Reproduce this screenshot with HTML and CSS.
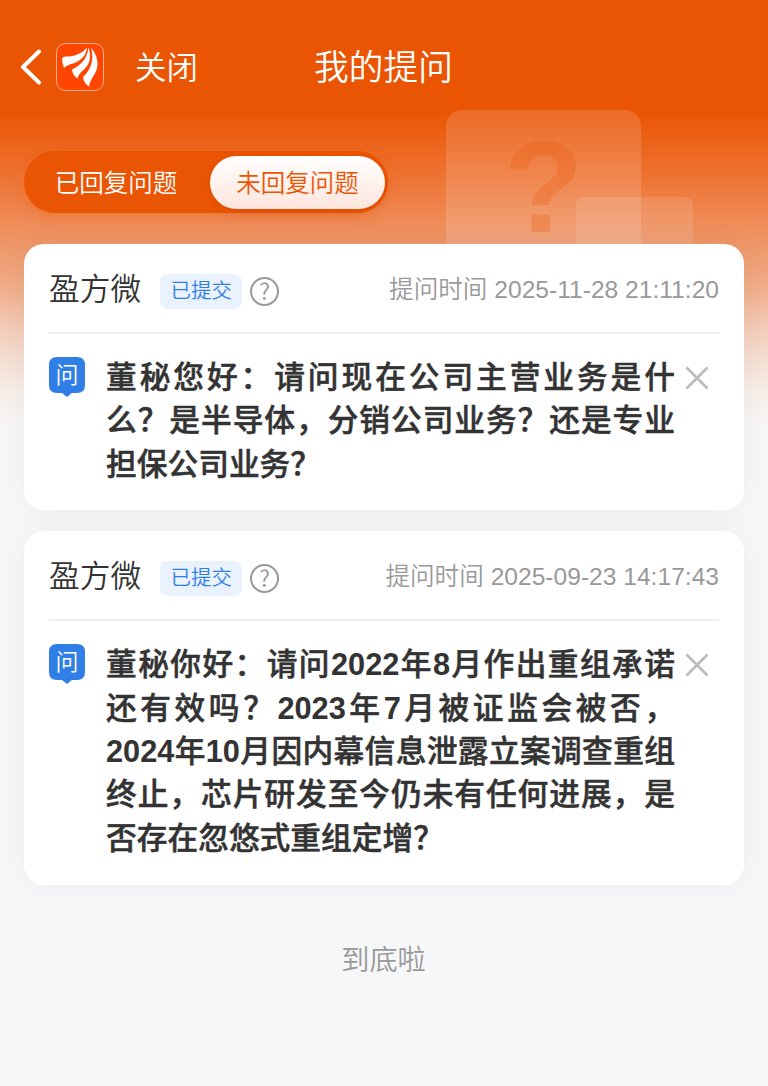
FILE: index.html
```html
<!DOCTYPE html>
<html lang="zh-CN">
<head>
    <meta charset="UTF-8">
    <meta name="viewport" content="width=device-width, initial-scale=1.0">
    <title>我的提问</title>
    <link rel="stylesheet" href="styles.css">
</head>
<body>

    <div class="banner-art">
        <div class="square-big"><span>?</span></div>
        <div class="square-small"></div>
    </div>

    <header class="nav">
        <svg class="back" width="22" height="36" viewBox="0 0 22 36"><path d="M19 2.500L3 18L19 33.500" fill="none" stroke="#fff" stroke-width="4" stroke-linecap="round" stroke-linejoin="round"/></svg>
        <svg class="logo" width="48" height="48" viewBox="0 0 48 48">
            <rect x="0.500" y="0.500" width="47" height="47" rx="9" fill="#ff4500" stroke="#ffb08c"/>
            <path d="M6 15.500Q7 13.800 10 13.600C19 13.500 27 10 31 4.200C30.500 12 25 18 17 20.500Q11 22 8 25Q6 20 6 15.500Z" fill="#fff"/>
            <path d="M32.300 4.200C35 12 34.500 18 31 23C28 27.500 23 29.500 21.500 35.500Q16.500 32 16 26.500C24 23 32 15 32.300 4.200Z" fill="#fff"/>
            <path d="M35 5C39 9 41.500 15 41.500 21C41.500 31 34.500 34 33 43.500Q27.500 40 27 34C35 27 38.500 16 35 5Z" fill="#fff"/>
        </svg>
        <span class="close">关闭</span>
        <h1 class="title">我的提问</h1>
    </header>

    <div class="tabs">
        <div class="tab">已回复问题</div>
        <div class="tab active">未回复问题</div>
    </div>

    <main class="list">
        <section class="card">
            <div class="card-head">
                <span class="stock">盈方微</span>
                <span class="tag">已提交</span>
                <span class="help">?</span>
                <span class="time">提问时间 2025-11-28 21:11:20</span>
            </div>
            <div class="card-body">
                <svg class="ask" width="36" height="40" viewBox="0 0 36 40">
                    <path d="M8 0H28Q36 0 36 8V28Q36 36 28 36H23L18 40L13 36H8Q0 36 0 28V8Q0 0 8 0Z" fill="#2f7fe6"/>
                    <text x="18" y="26" text-anchor="middle">问</text>
                </svg>
                <div class="question">
                    <p>董秘您好：请问现在公司主营业务是什</p>
                    <p>么？是半导体，分销公司业务？还是专业</p>
                    <p>担保公司业务？</p>
                </div>
                <svg class="remove" width="24" height="24" viewBox="0 0 24 24"><path d="M1.500 1.500L22.500 22.500M22.500 1.500L1.500 22.500" stroke="#bbb" stroke-width="2.600"/></svg>
            </div>
        </section>

        <section class="card">
            <div class="card-head">
                <span class="stock">盈方微</span>
                <span class="tag">已提交</span>
                <span class="help">?</span>
                <span class="time">提问时间 2025-09-23 14:17:43</span>
            </div>
            <div class="card-body">
                <svg class="ask" width="36" height="40" viewBox="0 0 36 40">
                    <path d="M8 0H28Q36 0 36 8V28Q36 36 28 36H23L18 40L13 36H8Q0 36 0 28V8Q0 0 8 0Z" fill="#2f7fe6"/>
                    <text x="18" y="26" text-anchor="middle">问</text>
                </svg>
                <div class="question">
                    <p>董秘你好：请问<b>2022</b>年<b>8</b>月作出重组承诺</p>
                    <p>还有效吗？<b>2023</b>年<b>7</b>月被证监会被否，</p>
                    <p><b>2024</b>年<b>10</b>月因内幕信息泄露立案调查重组</p>
                    <p>终止，芯片研发至今仍未有任何进展，是</p>
                    <p>否存在忽悠式重组定增？</p>
                </div>
                <svg class="remove" width="24" height="24" viewBox="0 0 24 24"><path d="M1.500 1.500L22.500 22.500M22.500 1.500L1.500 22.500" stroke="#bbb" stroke-width="2.600"/></svg>
            </div>
        </section>
    </main>

    <p class="end">到底啦</p>

</body>
</html>
```
FILE: styles.css
```css
* {
    box-sizing: border-box;
}

body {
    margin: 0;
    min-height: 1086px;
    position: relative;
    font-family: "Liberation Sans", "Noto Sans CJK SC", sans-serif;
    font-weight: 350;
    color: #333;
    background: #f6f7f9 linear-gradient(#ea5504 0, #ea5504 112px, #ee7535 180px, #ef9262 235px, #f1af8b 290px, #f4cab5 325px, #f5dfd3 360px, #f7eee9 392px, #f7f7f7 425px, #f7f7f8 600px, #f6f7f9 800px) no-repeat;
}

h1,
p {
    margin: 0;
    font-weight: inherit;
}

.banner-art {
    position: absolute;
    left: 446px;
    top: 110px;
    width: 248px;
    height: 150px;
    overflow: hidden;
}

.square-big {
    width: 195px;
    height: 195px;
    border-radius: 16px;
    background: rgba(255, 255, 255, 0.14);
    text-align: center;
}

.square-big span {
    font-size: 130px;
    line-height: 155px;
    font-weight: 700;
    color: rgba(234, 85, 4, 0.25);
}

.square-small {
    position: absolute;
    left: 130px;
    top: 87px;
    width: 117px;
    height: 117px;
    border-radius: 8px;
    background: rgba(255, 255, 255, 0.11);
}

.nav {
    position: relative;
    display: flex;
    align-items: center;
    height: 133px;
    padding-left: 20px;
    color: #fff;
}

.logo {
    margin-left: 14px;
}

.close {
    margin: 0 0 3px 31px;
    font-size: 31.500px;
}

.title {
    position: absolute;
    left: 0;
    right: 1px;
    padding-bottom: 3px;
    text-align: center;
    font-size: 34.700px;
}

.tabs {
    position: relative;
    display: flex;
    width: 364px;
    height: 62px;
    margin: 18px 0 0 24px;
    padding: 5px 3px 4px 0;
    border-radius: 31px;
    background: #ea5504;
    box-shadow: 0 4px 12px rgba(234, 85, 4, 0.3);
}

.tab {
    flex: 1;
    display: flex;
    align-items: center;
    justify-content: center;
    padding: 0 2px 2px 0;
    font-size: 24.500px;
    color: #fff;
}

.tab.active {
    flex: none;
    width: 175px;
    padding-right: 0;
    border-radius: 27px;
    color: #ea5504;
    background: linear-gradient(#fff, #fde5dc);
    box-shadow: 0 2px 6px rgba(170, 50, 0, 0.25);
}

.list {
    position: relative;
    display: flex;
    flex-direction: column;
    gap: 21px;
    padding: 31px 24px 0;
}

.card {
    padding: 0 25px 24.600px;
    border-radius: 20px;
    background: #fff;
    box-shadow: 0 0 30px rgba(0, 0, 0, 0.05);
}

.card-head {
    display: flex;
    align-items: center;
    height: 90px;
    border-bottom: 2px solid #eee;
}

.stock {
    margin-bottom: 3px;
    font-size: 30.720px;
}

.tag {
    width: 82px;
    height: 35px;
    margin: 6px 0 0 19px;
    border-radius: 8px;
    background: #eaf2fd;
    color: #2f7fe6;
    font-size: 20.500px;
    line-height: 34px;
    text-align: center;
}

.help {
    width: 29px;
    height: 29px;
    margin: 6px 0 0 8px;
    border: 2px solid #999;
    border-radius: 50%;
    color: #999;
    font-family: "Noto Sans CJK SC", sans-serif;
    font-size: 23px;
    line-height: 22px;
    text-align: center;
}

.time {
    margin: 0 0 3px auto;
    font-size: 24.600px;
    color: #999;
}

.card-body {
    display: flex;
    align-items: flex-start;
    padding-top: 22px;
}

.ask {
    margin-top: 1px;
}

.ask text {
    font-size: 23px;
    fill: #fff;
}

.question {
    width: 569px;
    margin-left: 21px;
    font-size: 30.720px;
    line-height: 43.300px;
}

.question p {
    font-weight: 500;
    white-space: nowrap;
    text-align: justify;
    text-align-last: justify;
    -webkit-text-stroke: 0.500px #333;
}

.question b {
    -webkit-text-stroke: 0;
}

.question p:last-child {
    text-align-last: left;
}

.remove {
    margin: 10px 0 0 10px;
}

.end {
    margin-top: 54px;
    padding-right: 1px;
    text-align: center;
    font-size: 28.200px;
    line-height: 42px;
    color: #999;
}
```
